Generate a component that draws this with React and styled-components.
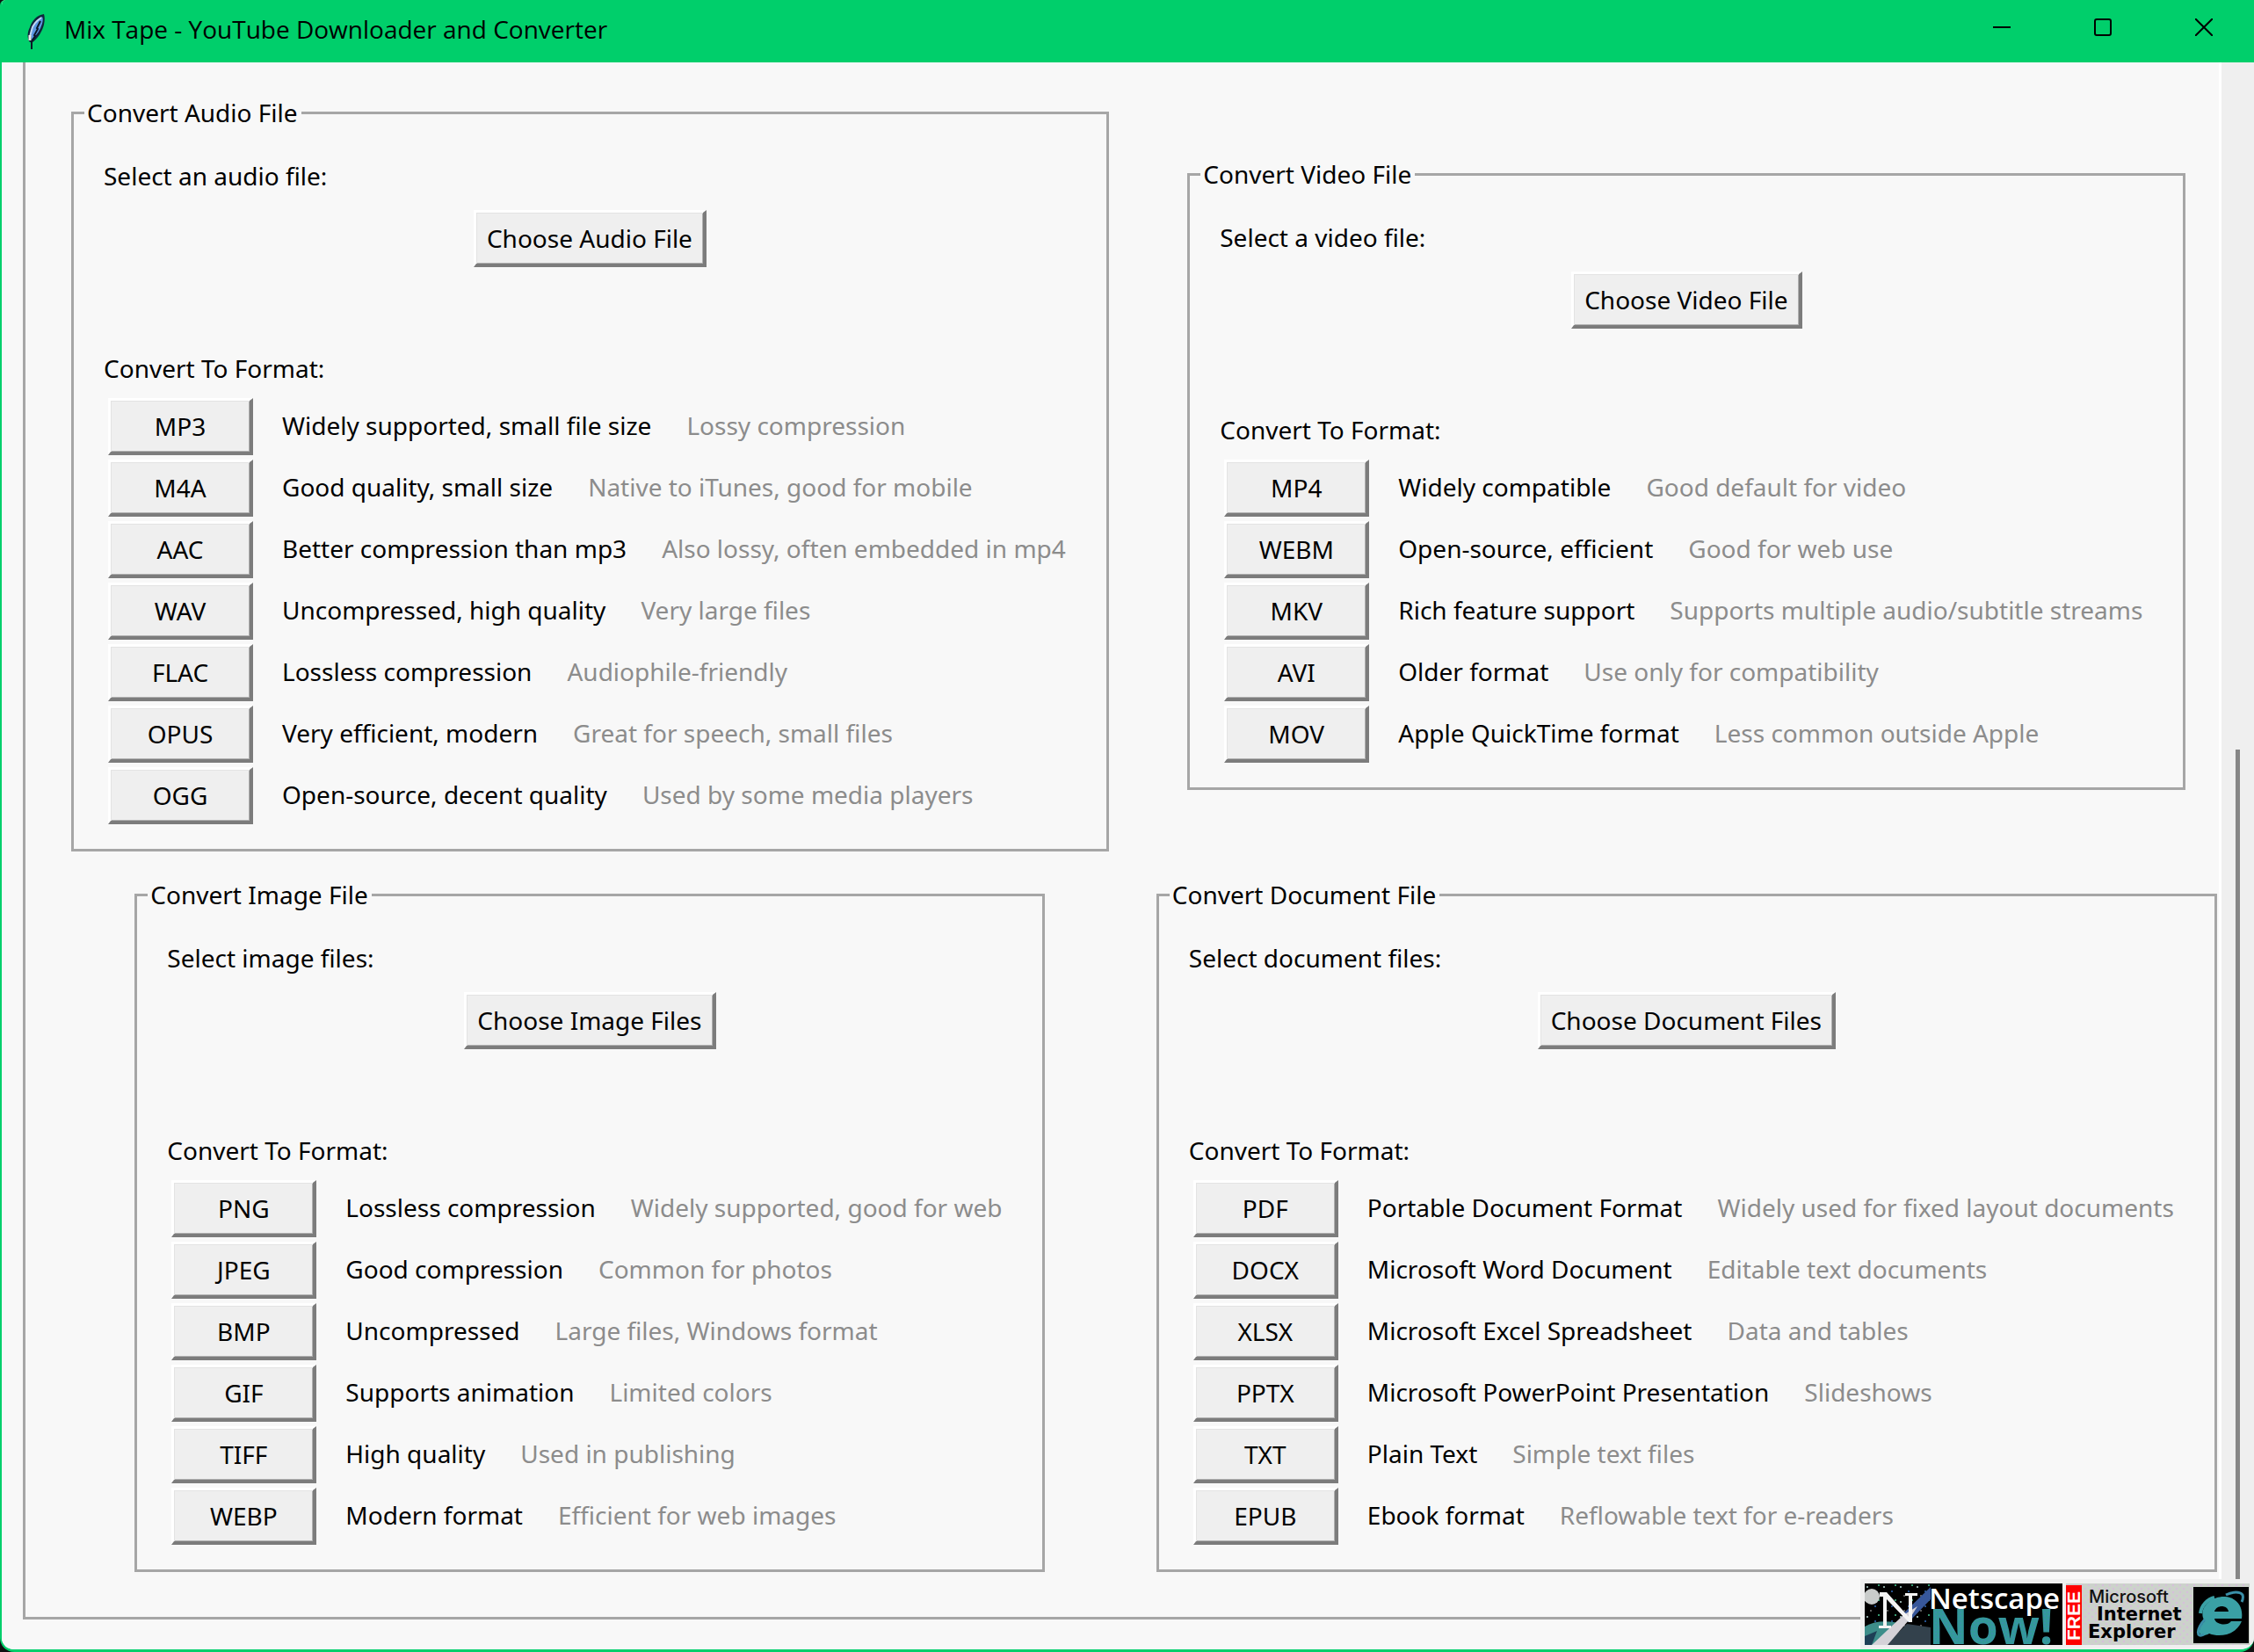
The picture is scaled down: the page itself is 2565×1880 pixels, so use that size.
import React from "react";
import styled, { createGlobalStyle } from "styled-components";

const GREEN = "#00cf6b";
const CANVAS = "#f8f8f8";
const CHROME = "#efefef";
const LINE = "#a6a6a6";

const GlobalStyle = createGlobalStyle`
  * { box-sizing: border-box; }
  body { margin: 0; background: #101010; }
  button { font: inherit; color: inherit; }
`;

const Window = styled.div`
  position: relative;
  display: flex;
  flex-direction: column;
  height: 100vh;
  overflow: hidden;
  background: ${CHROME};
  border: solid ${GREEN};
  border-width: 0 0 3px 2px;
  border-radius: 6px 0 16px 16px;
  font-family: "Noto Sans", "Open Sans", sans-serif;
  font-size: 28px;
  line-height: 40px;
  color: #000;
`;

const TitleBar = styled.header`
  display: flex;
  flex: none;
  align-items: center;
  height: 71px;
  padding-left: 26px;
  background: ${GREEN};
`;

const Title = styled.h1`
  flex: 1;
  margin: 0 0 0 21px;
  padding-bottom: 6px;
  font: 400 28px/40px "Open Sans", "Noto Sans", sans-serif;
`;

const WindowButton = styled.button`
  display: flex;
  align-items: center;
  justify-content: center;
  width: 115px;
  height: 62px;
  padding: 0;
  margin-bottom: 9px;
  border: 0;
  background: none;
`;

const Main = styled.main`
  display: flex;
  flex: 1;
  min-height: 0;
`;

const Viewport = styled.div`
  flex: 1;
  min-width: 0;
  overflow: hidden;
  padding-left: 24px;
  background: ${CANVAS};
  border-right: 3px solid #fff;
`;

const Frame = styled.div`
  display: grid;
  grid-template-columns: auto auto;
  justify-content: start;
  justify-items: center;
  align-items: center;
  gap: 29px 54px;
  width: max-content;
  padding: 37px 26px 51px 52px;
  border: solid ${LINE};
  border-width: 0 0 3px 3px;
`;

const Group = styled.fieldset`
  min-width: 0;
  margin: 0;
  padding: 0;
  border: 3px solid ${LINE};
`;

const Legend = styled.legend`
  margin-left: 12px;
  padding: 0 4px 0 3px;
`;

const GroupBody = styled.div`
  display: flex;
  flex-direction: column;
  align-items: flex-start;
  padding: 32px 34px 28px;
`;

const RaisedButton = styled.button`
  height: 65px;
  padding: 0 12px;
  border: solid;
  border-width: 3px 4px 4px 3px;
  border-color: #fff #7c7c7c #7c7c7c #fff;
  background: ${CHROME};
  box-shadow: inset 1px 1px 0 #e3e3e3, inset -1px -1px 0 #b0b0b0;
`;

const ChooseButton = styled(RaisedButton)`
  align-self: center;
  margin: 19px 0 95px;
`;

const FormatButton = styled(RaisedButton)`
  width: 165px;
`;

const FormatList = styled.ul`
  display: flex;
  flex-direction: column;
  gap: 5px;
  margin: 14px 0 0;
  padding: 0 12px 0 5px;
  list-style: none;
`;

const FormatRow = styled.li`
  display: flex;
  align-items: center;
  white-space: nowrap;
`;

const Description = styled.span`
  margin: 0 40px 4px 33px;
`;

const Hint = styled.span`
  margin-bottom: 4px;
  color: #8c8c8c;
`;

const ScrollTrack = styled.div`
  display: flex;
  flex: none;
  justify-content: center;
  width: 37px;
  padding: 782px 0 80px;
`;

const ScrollThumb = styled.div`
  width: 5px;
  background: #868686;
`;

const Badges = styled.footer`
  position: absolute;
  right: 0;
  bottom: 0;
  display: flex;
  gap: 4px;
  padding: 5px;
  background: ${CHROME};
`;

const BadgeLink = styled.a`
  display: block;
  height: 70px;
`;

const groups = [
  {
    title: "Convert Audio File",
    prompt: "Select an audio file:",
    action: "Choose Audio File",
    formats: [
      ["MP3", "Widely supported, small file size", "Lossy compression"],
      ["M4A", "Good quality, small size", "Native to iTunes, good for mobile"],
      ["AAC", "Better compression than mp3", "Also lossy, often embedded in mp4"],
      ["WAV", "Uncompressed, high quality", "Very large files"],
      ["FLAC", "Lossless compression", "Audiophile-friendly"],
      ["OPUS", "Very efficient, modern", "Great for speech, small files"],
      ["OGG", "Open-source, decent quality", "Used by some media players"],
    ],
  },
  {
    title: "Convert Video File",
    prompt: "Select a video file:",
    action: "Choose Video File",
    formats: [
      ["MP4", "Widely compatible", "Good default for video"],
      ["WEBM", "Open-source, efficient", "Good for web use"],
      ["MKV", "Rich feature support", "Supports multiple audio/subtitle streams"],
      ["AVI", "Older format", "Use only for compatibility"],
      ["MOV", "Apple QuickTime format", "Less common outside Apple"],
    ],
  },
  {
    title: "Convert Image File",
    prompt: "Select image files:",
    action: "Choose Image Files",
    formats: [
      ["PNG", "Lossless compression", "Widely supported, good for web"],
      ["JPEG", "Good compression", "Common for photos"],
      ["BMP", "Uncompressed", "Large files, Windows format"],
      ["GIF", "Supports animation", "Limited colors"],
      ["TIFF", "High quality", "Used in publishing"],
      ["WEBP", "Modern format", "Efficient for web images"],
    ],
  },
  {
    title: "Convert Document File",
    prompt: "Select document files:",
    action: "Choose Document Files",
    formats: [
      ["PDF", "Portable Document Format", "Widely used for fixed layout documents"],
      ["DOCX", "Microsoft Word Document", "Editable text documents"],
      ["XLSX", "Microsoft Excel Spreadsheet", "Data and tables"],
      ["PPTX", "Microsoft PowerPoint Presentation", "Slideshows"],
      ["TXT", "Plain Text", "Simple text files"],
      ["EPUB", "Ebook format", "Reflowable text for e-readers"],
    ],
  },
];

function FeatherIcon() {
  return (
    <svg width="24" height="42" viewBox="0 0 24 42" aria-hidden="true">
      <path d="M22 1C14 2 8 9 6 16C3 22 3 27 5 32L8 34C15 29 20 21 22 13C23 8 23 4 22 1Z" fill="#10263c" />
      <path d="M20 4C14 7 10 12 8 18C7 22 7 27 8 30C14 25 18 19 20 12C21 8 21 6 20 4Z" fill="#5b96e0" />
      <path d="M19 5C13 9 9 14 8 19L6 27" fill="none" stroke="#c3d8f3" strokeWidth="2" />
      <path d="M18 9L14 17L15 18L11 25L12 26L8 32V41" fill="none" stroke="#0b1726" strokeWidth="2" />
      <path d="M6 25V31" stroke="#e9efe9" strokeWidth="3" />
    </svg>
  );
}

function NetscapeBadge() {
  return (
    <svg width="225" height="70" viewBox="0 0 225 70" overflow="visible" role="img" aria-label="Netscape Now!">
      <defs>
        <clipPath id="netscape-clip"><rect width="225" height="70" /></clipPath>
        <pattern id="stars" width="19" height="17" patternUnits="userSpaceOnUse">
          <rect x="2" y="3" width="2" height="2" fill="#8aa4a0" />
          <rect x="11" y="8" width="2" height="2" fill="#24508c" />
          <rect x="6" y="13" width="2" height="2" fill="#5c5c5c" />
          <rect x="15" y="1" width="2" height="2" fill="#35996e" />
        </pattern>
        <pattern id="teal-dither" width="4" height="4" patternUnits="userSpaceOnUse">
          <rect width="4" height="4" fill="#339999" />
          <rect width="2" height="2" fill="#3a8fa8" />
        </pattern>
      </defs>
      <g clipPath="url(#netscape-clip)">
        <rect width="225" height="70" fill="#000" />
        <rect width="75" height="70" fill="url(#stars)" />
        <path d="M0 49C12 42 28 42 42 46L24 70H0Z" fill="#3d8d8a" />
        <path d="M0 60L14 54L8 70H0Z" fill="#1e3f56" />
        <path d="M24 70L48 46L75 50V70Z" fill="#33414c" />
        <path d="M44 34L75 4V18L52 42Z" fill="#37579a" />
        <circle cx="8" cy="15" r="9" fill="#c9cccb" />
        <path d="M8 70L44 36L60 26L50 42L26 70Z" fill="#d5d2d8" />
        <path d="M17 10H25L50 38V14H46V11H60V14H54V44H50L25 18V48H30V51H16V48H21V15H17Z" fill="#f4f4f4" />
      </g>
      <text x="73" y="69" fontFamily="Open Sans, sans-serif" fontWeight="700" fontSize="55" fill="url(#teal-dither)">Now!</text>
      <text x="73" y="29" fontFamily="Open Sans, sans-serif" fontWeight="600" fontSize="33" fill="#fff">Netscape</text>
    </svg>
  );
}

function ExplorerBadge() {
  return (
    <svg width="209" height="70" viewBox="0 0 209 70" role="img" aria-label="Free Microsoft Internet Explorer">
      <defs>
        <pattern id="grey-dither" width="8" height="8" patternUnits="userSpaceOnUse">
          <rect width="8" height="8" fill="#ccd2cb" />
          <rect x="1" y="1" width="2" height="2" fill="#d6bedb" />
          <rect x="5" y="5" width="2" height="2" fill="#d6bedb" />
        </pattern>
      </defs>
      <rect width="209" height="70" fill="url(#grey-dither)" />
      <rect y="2" width="18" height="68" fill="#f00" />
      <text transform="translate(16 65) rotate(-90)" fontFamily="Liberation Sans, sans-serif" fontWeight="700" fontSize="21" fill="#fff">FREE</text>
      <text x="26" y="22" fontFamily="Inter, sans-serif" fontWeight="500" fontSize="20" fill="#111">Microsoft</text>
      <text x="35" y="42" fontFamily="DejaVu Sans, sans-serif" fontWeight="700" fontSize="21" fill="#000">Internet</text>
      <text x="25" y="62" fontFamily="DejaVu Sans, sans-serif" fontWeight="700" fontSize="21" fill="#000">Explorer</text>
      <rect x="145" y="4" width="63" height="64" fill="#000" />
      <path d="M156 39C152 25 168 14 181 15C195 16 202 27 200 40H169C170 47 184 49 188 43H200C194 58 176 62 163 57C158 60 153 60 152 56C151 52 154 47 158 43M169 32H185C184 24 171 24 169 32Z" fill="#3aa0a5" fillRule="evenodd" />
      <path d="M157 58C148 63 148 52 158 41M182 13C190 9 198 9 201 13C202 16 201 19 200 21" fill="none" stroke="#3a8fa8" strokeWidth="3" />
      <path d="M153 34C154 25 161 18 169 16" fill="none" stroke="#3aa0a5" strokeWidth="4" />
    </svg>
  );
}

function ConvertGroup({ title, prompt, action, formats }) {
  return (
    <Group>
      <Legend>{title}</Legend>
      <GroupBody>
        <span>{prompt}</span>
        <ChooseButton type="button">{action}</ChooseButton>
        <span>Convert To Format:</span>
        <FormatList>
          {formats.map(([name, description, hint]) => (
            <FormatRow key={name}>
              <FormatButton type="button">{name}</FormatButton>
              <Description>{description}</Description>
              <Hint>{hint}</Hint>
            </FormatRow>
          ))}
        </FormatList>
      </GroupBody>
    </Group>
  );
}

export default function App() {
  return (
    <Window>
      <GlobalStyle />
      <TitleBar>
        <FeatherIcon />
        <Title>Mix Tape - YouTube Downloader and Converter</Title>
        <WindowButton type="button" aria-label="Minimize">
          <svg width="20" height="20" viewBox="0 0 20 20"><path d="M0 10H20" stroke="#000" strokeWidth="2" /></svg>
        </WindowButton>
        <WindowButton type="button" aria-label="Maximize">
          <svg width="20" height="20" viewBox="0 0 20 20"><rect x="1" y="1" width="18" height="18" rx="2" fill="none" stroke="#000" strokeWidth="2" /></svg>
        </WindowButton>
        <WindowButton type="button" aria-label="Close">
          <svg width="20" height="20" viewBox="0 0 20 20"><path d="M0 0L20 20M20 0L0 20" stroke="#000" strokeWidth="2" /></svg>
        </WindowButton>
      </TitleBar>
      <Main>
        <Viewport>
          <Frame>
            {groups.map((group) => (
              <ConvertGroup key={group.title} {...group} />
            ))}
          </Frame>
        </Viewport>
        <ScrollTrack>
          <ScrollThumb />
        </ScrollTrack>
      </Main>
      <Badges>
        <BadgeLink href="#netscape"><NetscapeBadge /></BadgeLink>
        <BadgeLink href="#explorer"><ExplorerBadge /></BadgeLink>
      </Badges>
    </Window>
  );
}
